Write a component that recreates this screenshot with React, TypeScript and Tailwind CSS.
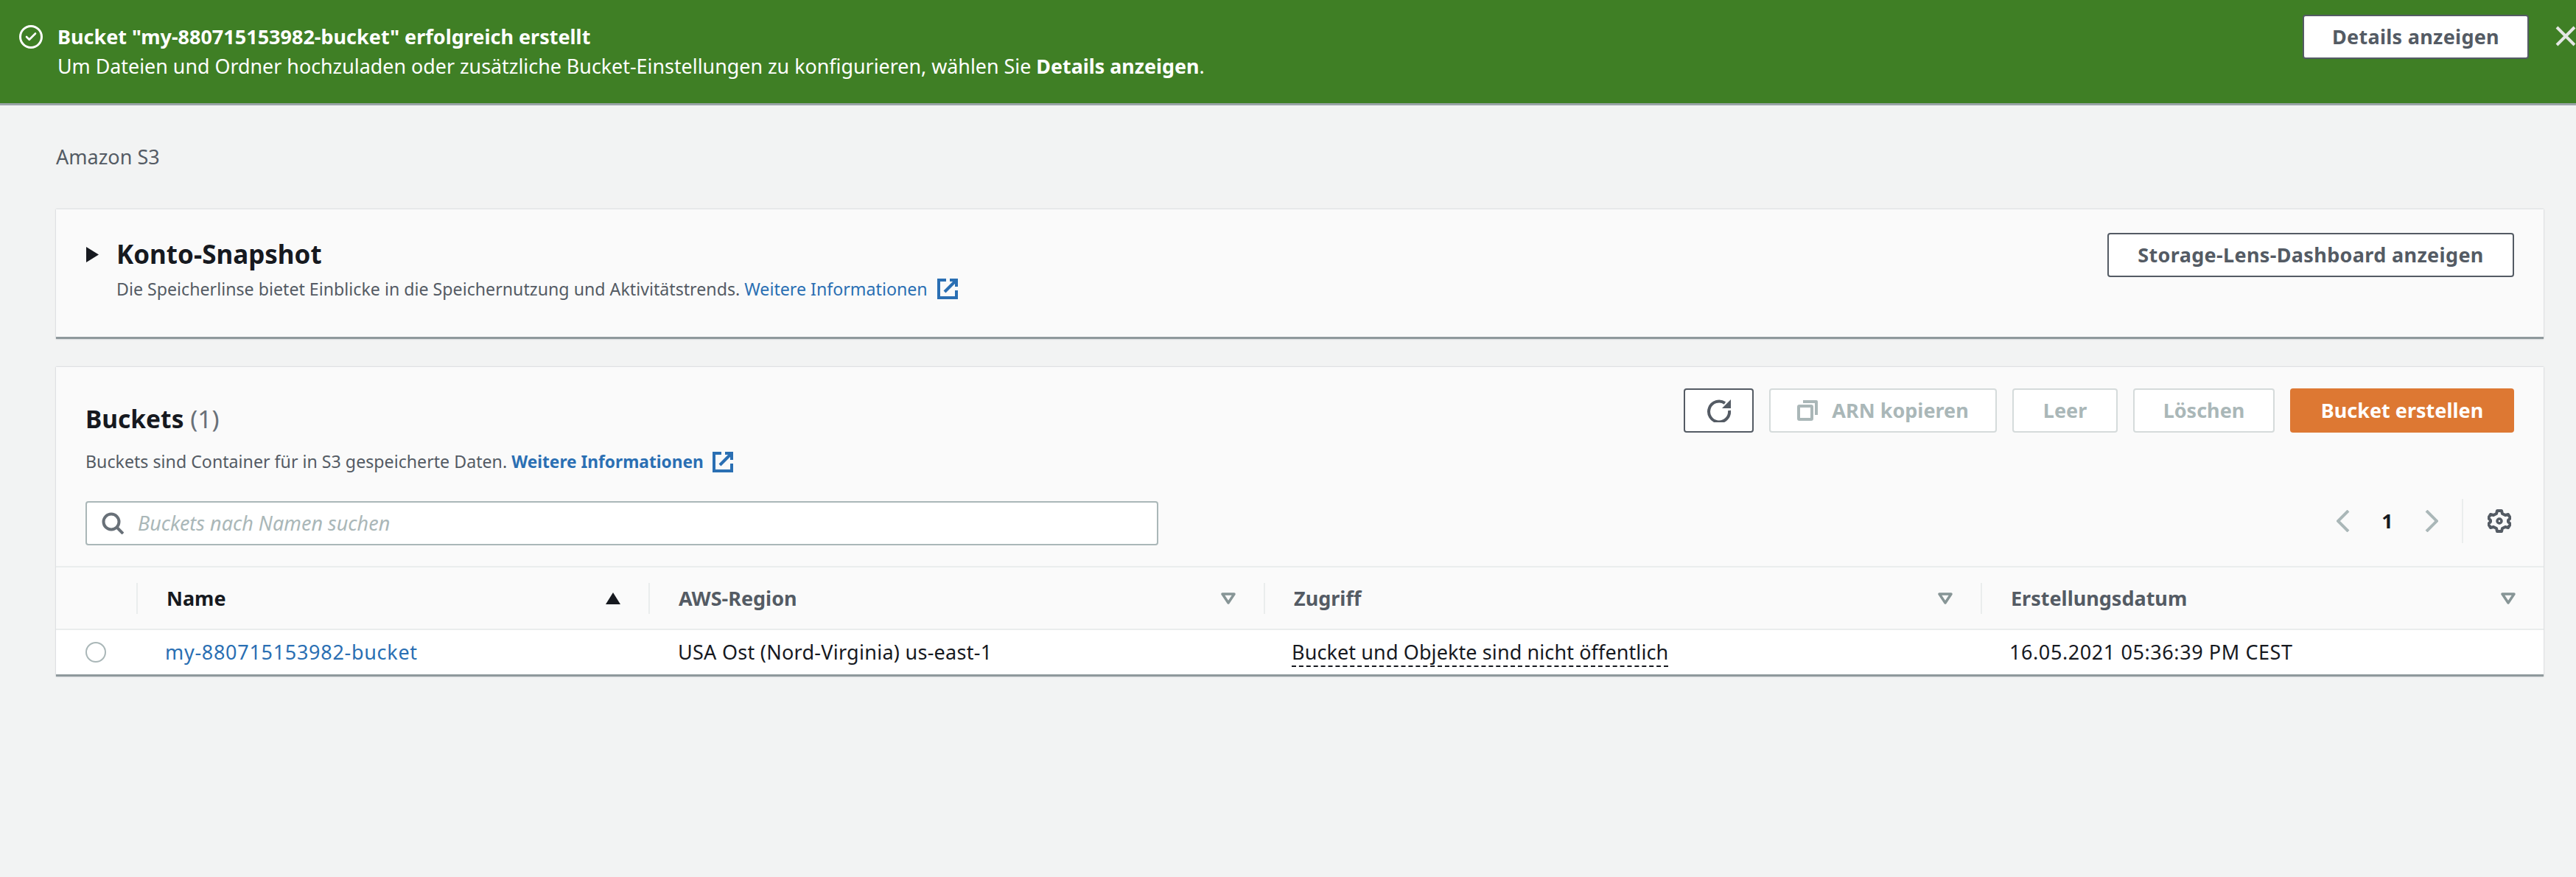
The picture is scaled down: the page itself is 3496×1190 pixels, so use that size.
import { Check } from 'lucide-react';
import type { ReactNode } from 'react';

function ExternalIcon() {
  return (
    <svg viewBox="0 0 28 28" className="w-[28px] h-[28px] shrink-0" fill="none" stroke="#2a6fb3" strokeWidth="4">
      <path d="M12 2H2v24h24V16" />
      <path d="M17 2h9v9" />
      <path d="M26 2L10 18" />
    </svg>
  );
}

function RefreshIcon() {
  return (
    <svg viewBox="0 0 32 32" className="w-[32px] h-[32px]" fill="none" stroke="#545b64" strokeWidth="4">
      <path d="M24 6A14 14 0 1 0 30 16" />
      <path d="M32 1v12H20z" fill="#545b64" stroke="none" />
    </svg>
  );
}

function CopyIcon() {
  return (
    <svg viewBox="0 0 28 28" className="w-[28px] h-[28px] shrink-0" fill="none" stroke="#aab7b8" strokeWidth="4" strokeLinejoin="round">
      <rect x="2" y="8" width="18" height="18" rx="1" />
      <path d="M8 2h18v18" />
    </svg>
  );
}

function SearchIcon() {
  return (
    <svg viewBox="0 0 30 30" className="w-[30px] h-[30px] shrink-0" fill="none" stroke="#687078" strokeWidth="4">
      <circle cx="13" cy="13" r="10.5" />
      <path d="M20 20l9 9" />
    </svg>
  );
}

function GearIcon() {
  return (
    <svg viewBox="0 0 32 32" className="w-[32px] h-[32px]" fill="none" stroke="#545b64" strokeWidth="4" strokeLinejoin="round">
      <path d="M13 2h6l1 4 4 2 4-1 3 5-3 3v2l3 3-3 5-4-1-4 2-1 4h-6l-1-4-4-2-4 1-3-5 3-3v-2l-3-3 3-5 4 1 4-2z" />
      <circle cx="16" cy="16" r="3" strokeWidth="3.5" />
    </svg>
  );
}

function Chevron({ right }: { right?: boolean }) {
  return (
    <svg viewBox="0 0 18 30" className="w-[18px] h-[30px] shrink-0" fill="none" stroke="#aab7b8" strokeWidth="4">
      <path d={right ? 'M2 1l14 14L2 29' : 'M16 1L2 15l14 14'} />
    </svg>
  );
}

function FilterCaret() {
  return (
    <svg viewBox="0 0 20 16" className="w-5 h-4 shrink-0" fill="none" stroke="#879596" strokeWidth="3.5" strokeLinejoin="round">
      <path d="M2 2h16l-8 12z" />
    </svg>
  );
}

function HeaderCell({ label, width, active }: { label: string; width: string; active?: boolean }) {
  return (
    <div className={`${width} h-[42px] flex items-center justify-between pl-[39px] pr-[38px] border-l-2 border-[#eaeded]`}>
      <span className={`font-bold ${active ? 'text-[#16191f]' : 'text-[#545b64]'}`}>{label}</span>
      {active ? (
        <svg viewBox="0 0 20 16" className="w-5 h-4 shrink-0" fill="#16191f"><path d="M10 0l10 16H0z" /></svg>
      ) : (
        <FilterCaret />
      )}
    </div>
  );
}

function OutlineButton({ children, width, disabled }: { children: ReactNode; width: string; disabled?: boolean }) {
  return (
    <button className={`${width} h-[60px] flex items-center justify-center rounded-[4px] border-2 bg-white font-bold ${disabled ? 'border-[#d5dbdb] text-[#aab7b8]' : 'border-[#545b64] text-[#545b64]'}`}>
      {children}
    </button>
  );
}

export default function App() {
  return (
    <div className="min-h-[1190px] bg-[#f2f3f3] text-[27px] leading-[40px] text-[#16191f] font-['Noto_Sans',sans-serif]">
      {/* success flash */}
      <div className="h-[143px] bg-[#3f7f25] border-b-[3px] border-[#9aa3a8] flex items-start text-white">
        <div className="mt-[34px] ml-[26px] w-[32px] h-[32px] rounded-full border-[3px] border-white flex items-center justify-center shrink-0">
          <Check size={18} strokeWidth={3.5} />
        </div>
        <div className="ml-[20px] mt-[30px] flex-1">
          <div className="font-bold">Bucket "my-880715153982-bucket" erfolgreich erstellt</div>
          <div className="text-[26.85px]">Um Dateien und Ordner hochzuladen oder zusätzliche Bucket-Einstellungen zu konfigurieren, wählen Sie <b>Details anzeigen</b>.</div>
        </div>
        <button className="mt-[20px] w-[307px] h-[60px] bg-white rounded-[4px] border-2 border-[#545b64] text-[#545b64] font-bold tracking-[0.28px] shrink-0">Details anzeigen</button>
        <svg viewBox="0 0 28 28" className="mt-[35px] ml-[36px] w-[28px] h-[28px] shrink-0" stroke="#e4e7e4" strokeWidth="4">
          <path d="M2 2l24 24M26 2L2 26" />
        </svg>
      </div>

      <div className="pl-[76px] pr-[44px]">
        <div className="pt-[50px] text-[#545b64]">Amazon S3</div>

        {/* account snapshot */}
        <section className="mt-[51px] h-[176px] bg-[#fafafa] border-b-[3px] border-[#8f999c] shadow-[0_0_2px_rgba(0,21,41,0.25)] flex justify-between pl-[41px] pr-[40px] pt-[32px]">
          <div className="flex">
            <svg viewBox="0 0 17 21" className="mt-[19px] w-[17px] h-[21px] shrink-0" fill="#16191f"><path d="M0 0l17 10.5L0 21z" /></svg>
            <div className="ml-[24px]">
              <div className="text-[35px] leading-[48px] font-bold mt-[5px]">Konto-Snapshot</div>
              <div className="flex items-center gap-[13px] text-[23.2px] text-[#545b64] mt-[3px]">
                <span>Die Speicherlinse bietet Einblicke in die Speichernutzung und Aktivitätstrends. <span className="text-[#2a6fb3]">Weitere Informationen</span></span>
                <ExternalIcon />
              </div>
            </div>
          </div>
          <OutlineButton width="w-[552px] tracking-[0.35px]">Storage-Lens-Dashboard anzeigen</OutlineButton>
        </section>

        {/* buckets */}
        <section className="mt-[38px] bg-[#fafafa] border-b-[3px] border-[#8f999c] shadow-[0_0_2px_rgba(0,21,41,0.25)]">
          <div className="h-[270px] pl-[40px] pr-[40px] pt-[29px] flex justify-between">
            <div className="flex flex-col">
              <div className="text-[33.5px] leading-[48px] mt-[17px]"><span className="font-bold">Buckets</span> <span className="text-[#687078]">(1)</span></div>
              <div className="flex items-center gap-[12px] text-[23.2px] text-[#545b64] mt-[14px]">
                <span>Buckets sind Container für in S3 gespeicherte Daten. <span className="text-[#2a6fb3] font-bold text-[22.7px]">Weitere Informationen</span></span>
                <ExternalIcon />
              </div>
              <div className="mt-[33px] w-[1456px] h-[60px] bg-white border-2 border-[#aab7b8] rounded-[4px] flex items-center pl-[20px] gap-[19px]">
                <SearchIcon />
                <span className="italic text-[#aab7b8]">Buckets nach Namen suchen</span>
              </div>
            </div>
            <div className="flex flex-col items-end">
              <div className="flex gap-[21px]">
                <button className="w-[95px] h-[60px] flex items-center justify-center bg-white border-2 border-[#545b64] rounded-[4px]"><RefreshIcon /></button>
                <OutlineButton width="w-[309px] gap-[19px]" disabled><CopyIcon />ARN kopieren</OutlineButton>
                <OutlineButton width="w-[143px]" disabled>Leer</OutlineButton>
                <OutlineButton width="w-[192px]" disabled>Löschen</OutlineButton>
                <button className="w-[304px] h-[60px] rounded-[4px] bg-[#dd7833] text-white font-bold">Bucket erstellen</button>
              </div>
              <div className="mt-[90px] h-[60px] flex items-center mr-[4px]">
                <Chevron />
                <span className="w-[102px] text-center font-bold">1</span>
                <Chevron right />
                <div className="ml-[32px] pl-[33px] h-[60px] border-l-2 border-[#eaeded] flex items-center"><GearIcon /></div>
              </div>
            </div>
          </div>

          {/* table */}
          <div className="h-[87px] border-y-2 border-[#eaeded] flex items-center">
            <div className="w-[109px] shrink-0" />
            <HeaderCell label="Name" width="w-[695px]" active />
            <HeaderCell label="AWS-Region" width="w-[835px]" />
            <HeaderCell label="Zugriff" width="w-[973px]" />
            <HeaderCell label="Erstellungsdatum" width="flex-1" />
          </div>
          <div className="h-[60px] bg-white flex items-center">
            <div className="w-[109px] pl-[40px] shrink-0"><div className="w-[28px] h-[28px] rounded-full border-2 border-[#aab7b8] bg-white" /></div>
            <div className="w-[695px] pl-[39px] text-[#2a6fb3] tracking-[0.7px]">my-880715153982-bucket</div>
            <div className="w-[835px] pl-[40px] tracking-[0.27px]">USA Ost (Nord-Virginia) us-east-1</div>
            <div className="w-[973px] pl-[38px] tracking-[0.1px]"><span className="border-b-2 border-dashed border-[#16191f]">Bucket und Objekte sind nicht öffentlich</span></div>
            <div className="flex-1 pl-[39px] tracking-[0.58px]">16.05.2021 05:36:39 PM CEST</div>
          </div>
        </section>
      </div>
    </div>
  );
}
